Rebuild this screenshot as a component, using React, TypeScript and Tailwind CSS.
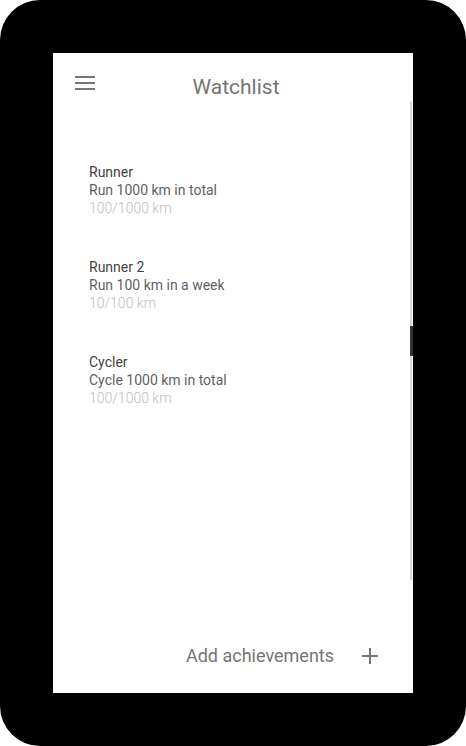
import React from "react";

type Goal = { name: string; desc: string; progress: string };

const goals: Goal[] = [
	{ name: "Runner", desc: "Run 1000 km in total", progress: "100/1000 km" },
	{ name: "Runner 2", desc: "Run 100 km in a week", progress: "10/100 km" },
	{ name: "Cycler", desc: "Cycle 1000 km in total", progress: "100/1000 km" }
];

function GoalRow({ goal }: { goal: Goal }) {
	return (
		<div className="flex flex-col text-[14px] leading-[18px]">
			<span className="text-[#424242]">{goal.name}</span>
			<span className="text-[#5f5f5f]">{goal.desc}</span>
			<span className="font-light text-[#bdbdbd]">{goal.progress}</span>
		</div>
	);
}

export default function App() {
	return (
		<div className="h-[746px] w-[466px] bg-white" style={{ fontFamily: "Roboto, 'Noto Sans', sans-serif" }}>
			<div className="flex h-full w-full rounded-[40px] bg-black p-[53px]">
				<div className="relative flex flex-1 flex-col bg-white">
					{/* Toolbar */}
					<div className="flex h-[64px] items-center">
						<div className="flex w-[64px] pl-[22px] pb-[4px]">
							<div className="flex w-[20px] flex-col gap-[4px]">
								<span className="h-[2px] bg-[#757575]" />
								<span className="h-[2px] bg-[#757575]" />
								<span className="h-[2px] bg-[#757575]" />
							</div>
						</div>
						<h1 className="flex-1 pt-[6px] text-center text-[21px] text-[#757575]">Watchlist</h1>
						<div className="w-[58px]" />
					</div>

					{/* List */}
					<div className="flex flex-1 flex-col gap-[41px] pl-[36px] pt-[46px]">
						{goals.map((g) => (
							<GoalRow key={g.name} goal={g} />
						))}
					</div>

					{/* Footer */}
					<div className="flex h-[76px] items-center justify-end gap-[28px] pr-[35px] pt-[1px]">
						<span className="text-[18px] text-[#757575]">Add achievements</span>
						<svg width="16" height="16" viewBox="0 0 16 16" className="text-[#757575]">
							<path d="M8 0v16M0 8h16" stroke="currentColor" strokeWidth="2" />
						</svg>
					</div>

					{/* Scrollbar */}
					<div className="absolute right-[1px] top-[48px] h-[479px] w-[2px] bg-[#dadada]" />
					<div className="absolute right-0 top-[273px] h-[30px] w-[3px] bg-[#333333]" />
				</div>
			</div>
		</div>
	);
}
